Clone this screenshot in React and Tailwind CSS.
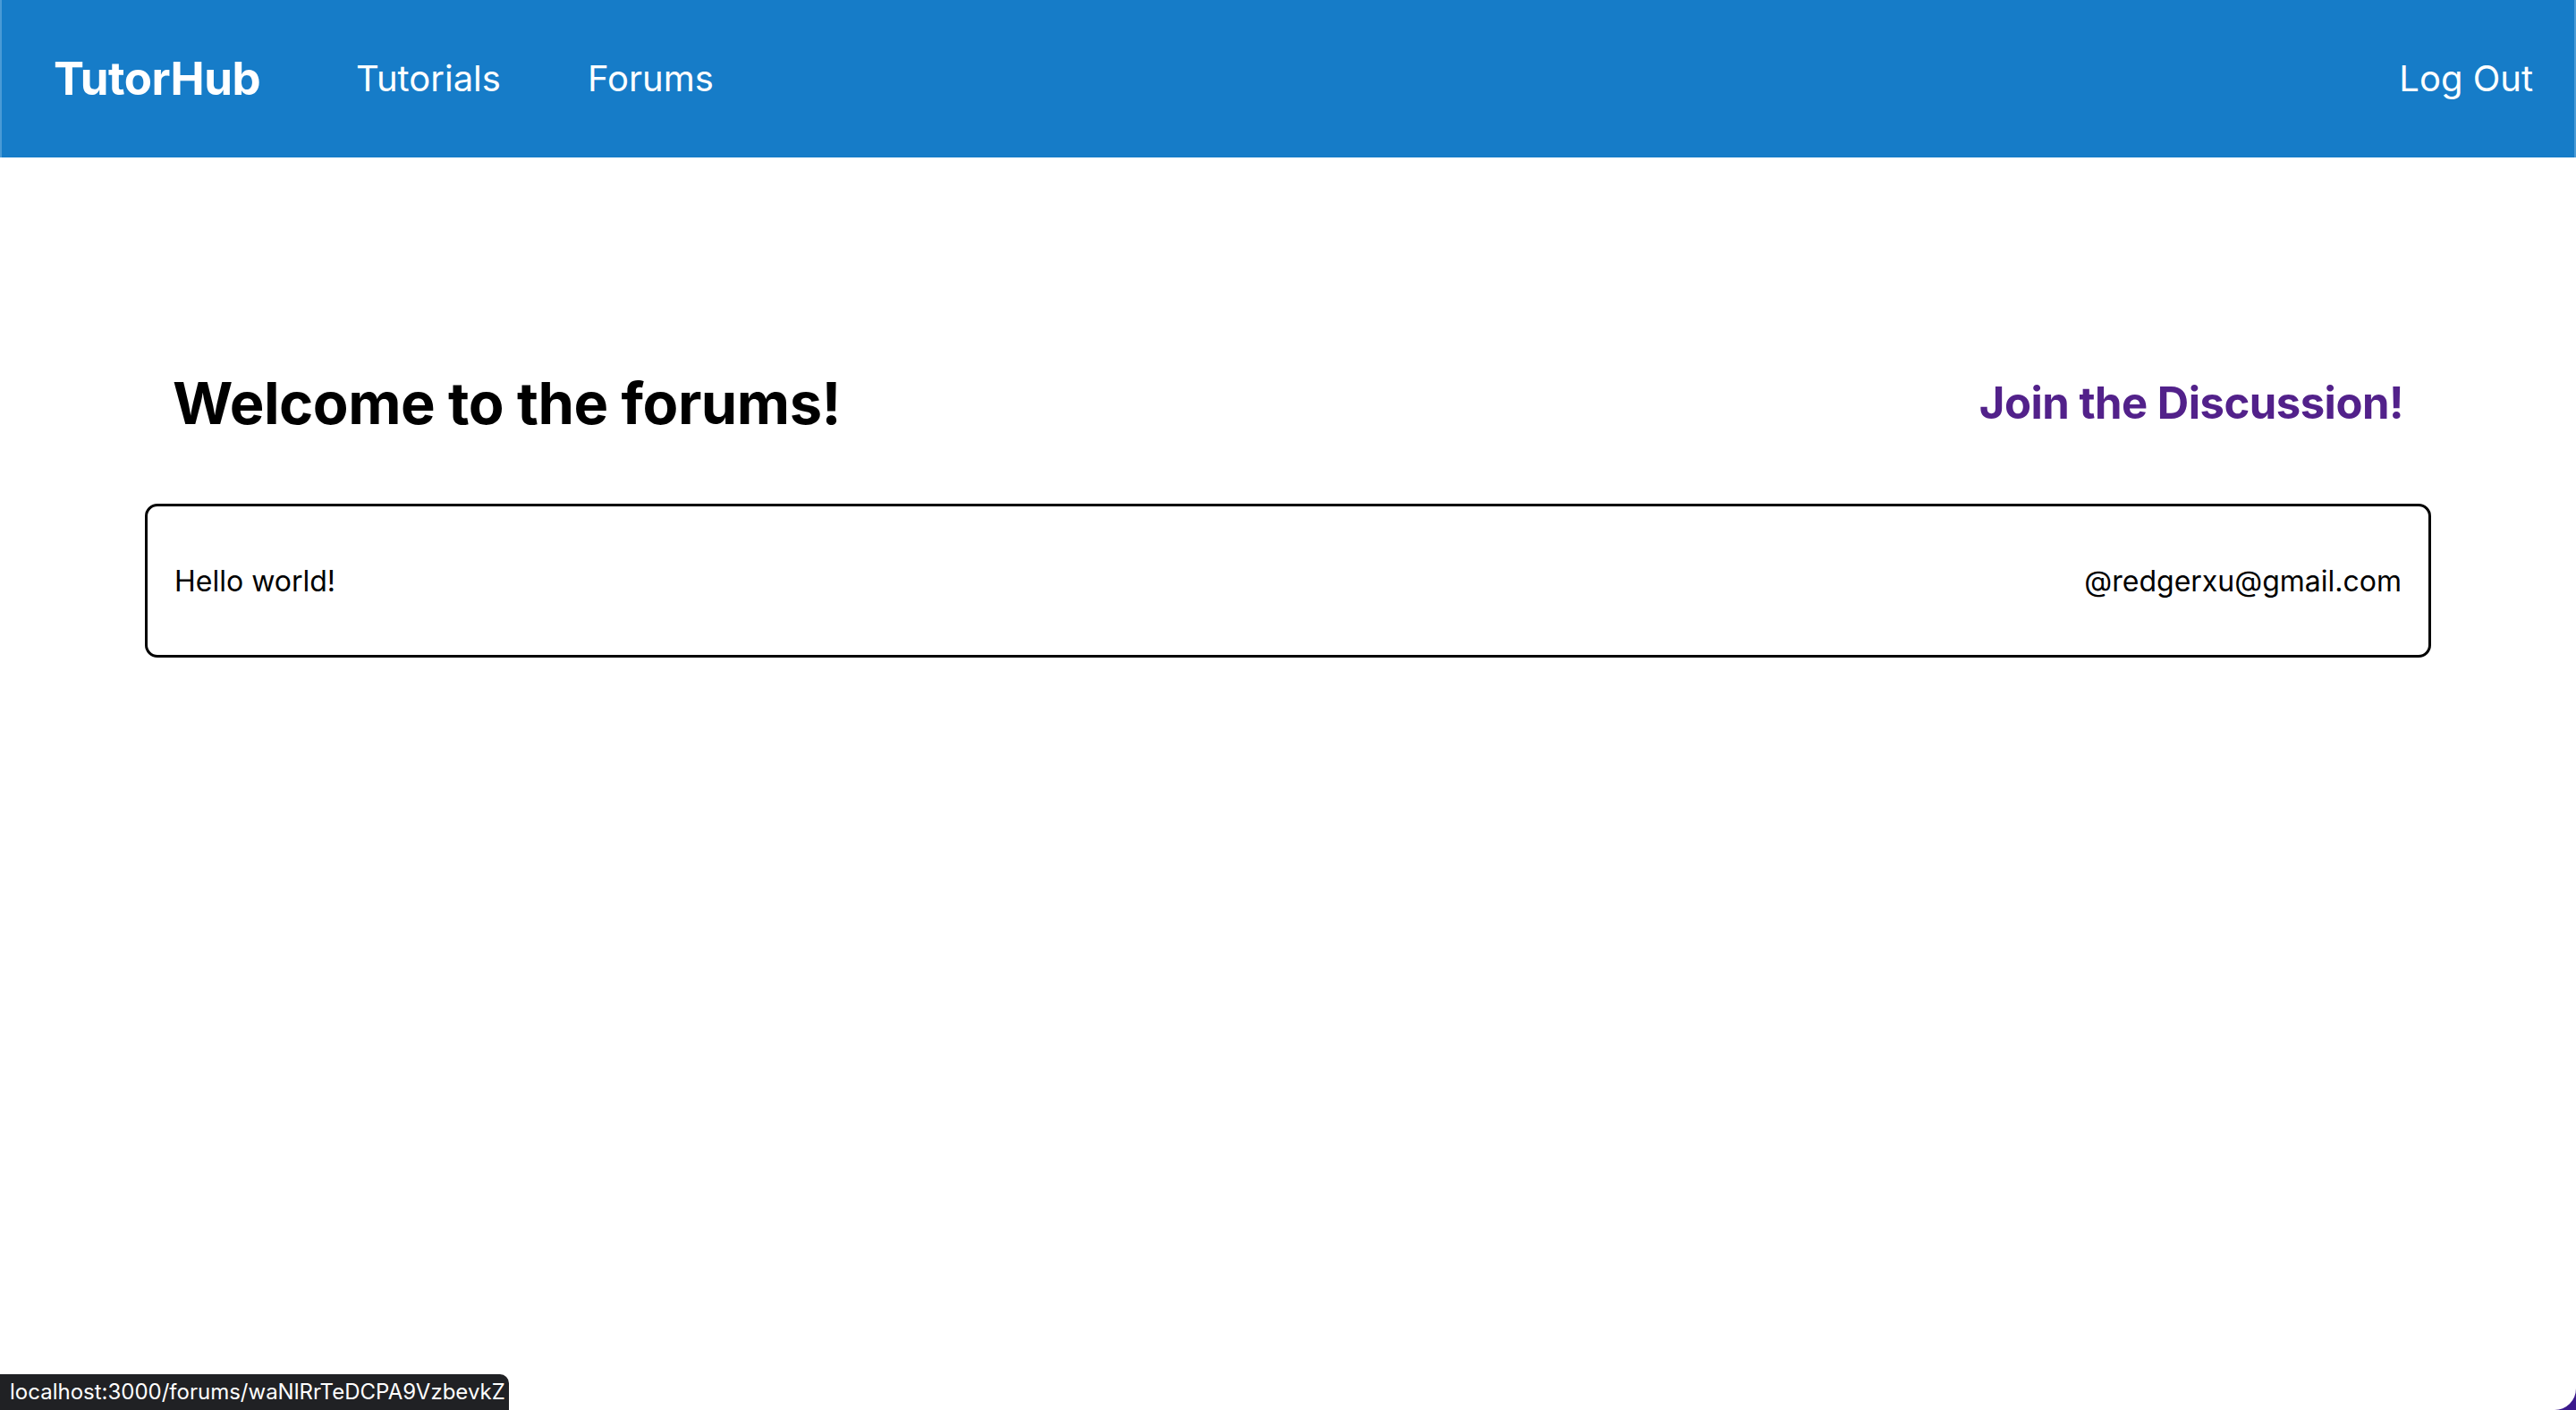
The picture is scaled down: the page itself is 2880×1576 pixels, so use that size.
import React from 'react'

const posts = [
  { id: 'waNlRrTeDCPA9VzbevkZ', title: 'Hello world!', author: '@redgerxu@gmail.com' },
]

export default function App() {
  return (
    <div className="relative min-h-[1576px] bg-white font-['Inter',sans-serif] text-black">
      {/* Navbar */}
      <nav className="flex h-[176px] items-center justify-between border-x-2 border-x-[#4a9ad6] bg-[#167cc8] pl-[58px] pr-[46px] text-white">
        <div className="flex items-center">
          <a href="#" className="text-[51px] font-bold tracking-[-0.5px]">TutorHub</a>
          <a href="#" className="ml-[107px] text-[40px]">Tutorials</a>
          <a href="#" className="ml-[97px] text-[40px]">Forums</a>
        </div>
        <a href="#" className="text-[40px]">Log Out</a>
      </nav>

      {/* Forums */}
      <main className="ml-[162px] w-[2556px] pt-[226px]">
        <div className="flex items-center justify-between px-[31px]">
          <h1 className="text-[65px] font-bold tracking-[-0.5px]">Welcome to the forums!</h1>
          <a href="#" className="text-[49px] font-bold tracking-[-0.5px] text-[#52218a]">Join the Discussion!</a>
        </div>

        <div className="mt-[63px] flex flex-col">
          {posts.map((post) => (
            <a
              key={post.id}
              href="#"
              className="flex h-[172px] items-center justify-between rounded-[14px] border-[3px] border-black px-[30px] pt-[2px] text-[32px]"
            >
              <span>{post.title}</span>
              <span>{post.author}</span>
            </a>
          ))}
        </div>
      </main>

      {/* Link preview status bar */}
      <div className="absolute bottom-0 left-0 flex h-[40px] w-[569px] items-center whitespace-nowrap rounded-tr-[10px] bg-[#202124] pl-[11px] text-[24px] text-white">
        localhost:3000/forums/waNlRrTeDCPA9VzbevkZ
      </div>

      {/* Window corner */}
      <div className="absolute bottom-0 right-0 h-[28px] w-[28px] bg-[#3b1a8c]">
        <div className="h-full w-full rounded-br-[24px] bg-white" />
      </div>
    </div>
  )
}
